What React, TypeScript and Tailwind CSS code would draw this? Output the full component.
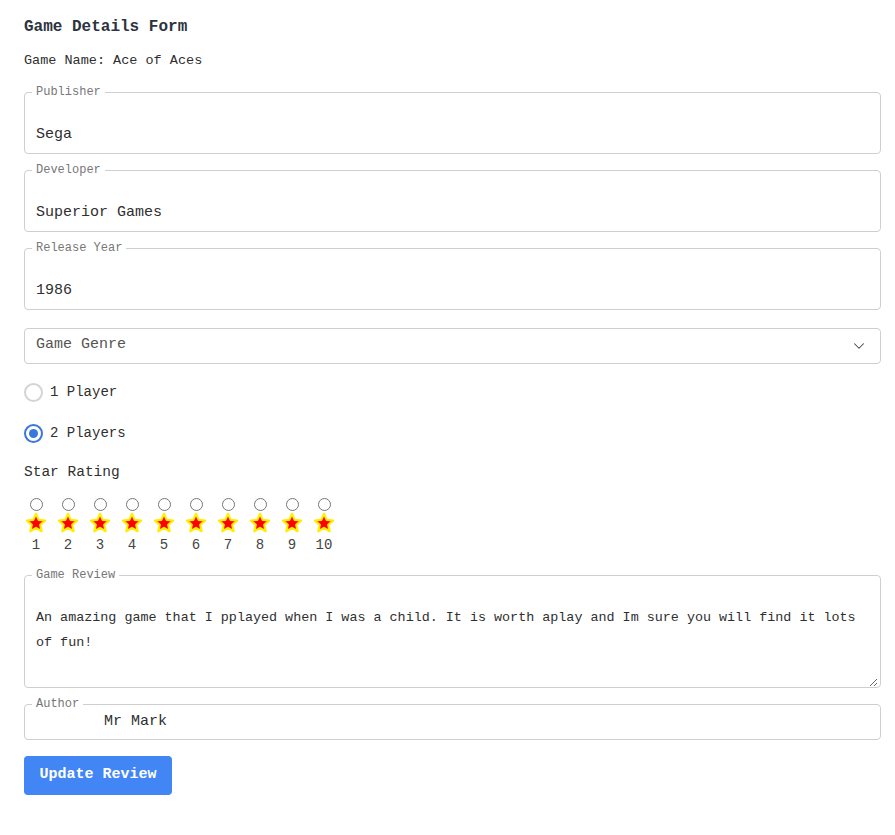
import { ChevronDown } from 'lucide-react';

const font = { fontFamily: '"Liberation Mono", "DejaVu Sans Mono", monospace' };

function Star() {
  return (
    <svg width="22" height="22" viewBox="0 0 24 24">
      <polygon
        points="12,2 14.9,8.6 22,9.3 16.6,14 18.2,21 12,17.3 5.8,21 7.4,14 2,9.3 9.1,8.6"
        fill="#ff0000"
        stroke="#ffee00"
        strokeWidth="2.4"
        strokeLinejoin="round"
      />
    </svg>
  );
}

function Field({ label, value }: { label: string; value: string }) {
  return (
    <fieldset className="border border-[#cfcfcf] rounded-[4px] px-[7px] h-[69px]">
      <legend className="px-1 text-[12px] leading-[14px] text-[#777]">{label}</legend>
      <div className="mt-[18px] h-[36px] px-1 flex items-center text-[15px] text-[#2f2f2f]">{value}</div>
    </fieldset>
  );
}

export default function App() {
  const stars = [1, 2, 3, 4, 5, 6, 7, 8, 9, 10];

  return (
    <div className="bg-white min-h-[835px] pl-[24px] pr-[14px] pt-[17px] text-[#2f2f2f]" style={font}>
      <h2 className="text-[16px] leading-[20px] font-bold text-[#2d3340]">Game Details Form</h2>
      <p className="mt-[14px] text-[13.5px] leading-[20px]">Game Name: Ace of Aces</p>

      <div className="mt-[14px] flex flex-col gap-[9px]">
        <Field label="Publisher" value="Sega" />
        <Field label="Developer" value="Superior Games" />
        <Field label="Release Year" value="1986" />
      </div>

      <div className="mt-[18px] h-[36px] border border-[#cfcfcf] rounded-[4px] flex items-center justify-between pl-[11px] pr-[12px]">
        <span className="text-[15px] text-[#555] -mt-[2px]">Game Genre</span>
        <ChevronDown size={18} strokeWidth={1.4} className="text-[#444]" />
      </div>

      <div className="mt-[18px] h-[20px] flex items-center gap-[7px] text-[14px]">
        <span className="w-[19px] h-[19px] rounded-full border-2 border-[#d4d4d4] bg-white" />
        <span>1 Player</span>
      </div>
      <div className="mt-[21px] h-[20px] flex items-center gap-[7px] text-[14px]">
        <span className="w-[19px] h-[19px] rounded-full border-2 border-[#3a78d8] bg-white flex items-center justify-center">
          <span className="w-[9px] h-[9px] rounded-full bg-[#3a78d8]" />
        </span>
        <span>2 Players</span>
      </div>

      <p className="mt-[19px] text-[14.5px] leading-[20px]">Star Rating</p>

      <div className="mt-[16px] -ml-1 flex">
        {stars.map((n) => (
          <div key={n} className="w-[32px] flex flex-col items-center">
            <span className="w-[13px] h-[13px] rounded-full border border-[#767676] bg-white" />
            <span className="mt-[1px] h-[22px] flex items-center">
              <Star />
            </span>
            <span className="mt-[3px] text-[14px] leading-[16px] text-[#444]">{n}</span>
          </div>
        ))}
      </div>

      <fieldset className="mt-[15px] border border-[#cfcfcf] rounded-[4px] px-[7px] pr-[2px]">
        <legend className="px-1 text-[12px] leading-[14px] text-[#777]">Game Review</legend>
        <textarea
          className="block w-full h-[105px] pt-[23px] px-1 text-[13.4px] leading-[25px] text-[#2f2f2f] outline-none resize-y"
          style={font}
          defaultValue="An amazing game that I pplayed when I was a child. It is worth aplay and Im sure you will find it lots of fun!"
        />
      </fieldset>

      <fieldset className="mt-[9px] border border-[#cfcfcf] rounded-[4px] px-[7px] pb-[6px]">
        <legend className="px-1 text-[12px] leading-[14px] text-[#777]">Author</legend>
        <div className="h-[22px] pl-[72px] flex items-center text-[15px] text-[#2f2f2f]">Mr Mark</div>
      </fieldset>

      <button
        type="button"
        className="mt-[16px] w-[148px] h-[39px] rounded-[4px] bg-[#4285f4] text-white text-[15px] font-bold"
        style={font}
      >
        Update Review
      </button>
    </div>
  );
}
